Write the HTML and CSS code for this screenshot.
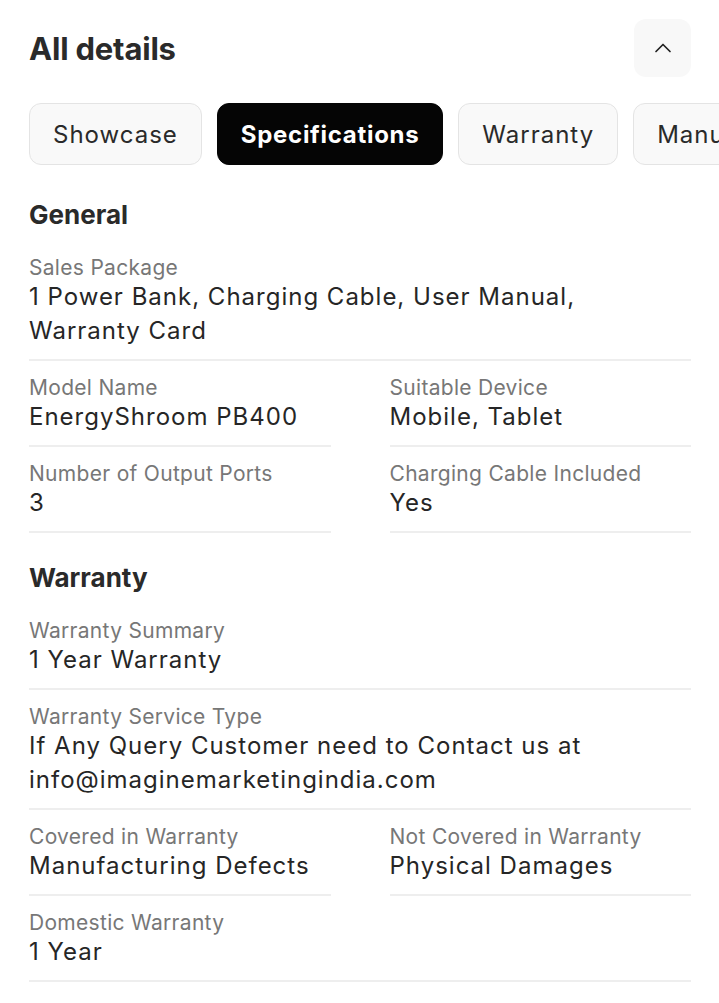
FILE: index.html
```html
<!DOCTYPE html>
<html lang="en">
<head>
<meta charset="utf-8">
<title>All details</title>
<link rel="stylesheet" href="styles.css">
</head>
<body>
<main class="page">
  <header class="top">
    <h1 class="title">All details</h1>
    <button class="collapse" aria-label="Collapse">
      <svg width="24" height="24" viewBox="0 0 24 24" fill="none" stroke="#222" stroke-width="1.7" stroke-linecap="round" stroke-linejoin="round"><path d="M5 15.5l7-7 7 7"/></svg>
    </button>
  </header>

  <nav class="tabs">
    <button class="tab">Showcase</button>
    <button class="tab active">Specifications</button>
    <button class="tab">Warranty</button>
    <button class="tab">Manufacturer Info</button>
  </nav>

  <section class="group">
    <h2 class="group-title">General</h2>
    <div class="grid">
      <div class="item full">
        <div class="label">Sales Package</div>
        <div class="value">1 Power Bank, Charging Cable, User Manual, Warranty Card</div>
      </div>
      <div class="item">
        <div class="label">Model Name</div>
        <div class="value">EnergyShroom PB400</div>
      </div>
      <div class="item">
        <div class="label">Suitable Device</div>
        <div class="value">Mobile, Tablet</div>
      </div>
      <div class="item">
        <div class="label">Number of Output Ports</div>
        <div class="value">3</div>
      </div>
      <div class="item">
        <div class="label">Charging Cable Included</div>
        <div class="value">Yes</div>
      </div>
    </div>
  </section>

  <section class="group">
    <h2 class="group-title">Warranty</h2>
    <div class="grid">
      <div class="item full">
        <div class="label">Warranty Summary</div>
        <div class="value">1 Year Warranty</div>
      </div>
      <div class="item full">
        <div class="label">Warranty Service Type</div>
        <div class="value">If Any Query Customer need to Contact us at info@imaginemarketingindia.com</div>
      </div>
      <div class="item">
        <div class="label">Covered in Warranty</div>
        <div class="value">Manufacturing Defects</div>
      </div>
      <div class="item">
        <div class="label">Not Covered in Warranty</div>
        <div class="value">Physical Damages</div>
      </div>
      <div class="item full">
        <div class="label">Domestic Warranty</div>
        <div class="value">1 Year</div>
      </div>
    </div>
  </section>
</main>
</body>
</html>
```

FILE: styles.css
```css
* { box-sizing: border-box; }

html, body {
  margin: 0;
  padding: 0;
  background: #ffffff;
}

body {
  font-family: "Inter", "Liberation Sans", sans-serif;
  color: #222222;
  overflow: hidden;
}

.page {
  padding: 19px 28px 0 29px;
}

.top {
  display: flex;
  align-items: center;
  justify-content: space-between;
  height: 58px;
}

.title {
  margin: 0;
  font-size: 31px;
  font-weight: 700;
  letter-spacing: -0.2px;
  color: #2a2a2a;
}

.collapse {
  width: 57px;
  height: 58px;
  border: none;
  border-radius: 12px;
  background: #f8f8f8;
  display: flex;
  align-items: center;
  justify-content: center;
  padding: 0;
}

.tabs {
  display: flex;
  gap: 15px;
  margin-top: 26px;
  margin-right: -28px;
  overflow: hidden;
}

.tab {
  flex: none;
  height: 62px;
  padding: 0 23px;
  border: 1px solid #e4e4e4;
  border-radius: 12px;
  background: #f9f9f9;
  font-family: inherit;
  font-size: 24px;
  letter-spacing: 1px;
  color: #2a2a2a;
}

.tab.active {
  background: #050505;
  border-color: #050505;
  color: #ffffff;
  font-weight: 700;
  letter-spacing: 0.7px;
}

.group-title {
  margin: 34px 0 10px;
  font-size: 26px;
  line-height: 32px;
  font-weight: 700;
  color: #2a2a2a;
}

.group + .group .group-title {
  margin-top: 29px;
}

.grid {
  display: grid;
  grid-template-columns: 1fr 1fr;
  column-gap: 59px;
}

.item {
  padding: 15px 0 11px;
  border-bottom: 2px solid #eeeeee;
}

.item.full {
  grid-column: 1 / -1;
}

.label {
  font-size: 21px;
  line-height: 24px;
  color: #777777;
  letter-spacing: 0.3px;
}

.value {
  font-size: 24px;
  line-height: 34px;
  color: #262626;
  letter-spacing: 1px;
  padding-right: 100px;
}

.item:not(.full) .value {
  padding-right: 0;
}
```
